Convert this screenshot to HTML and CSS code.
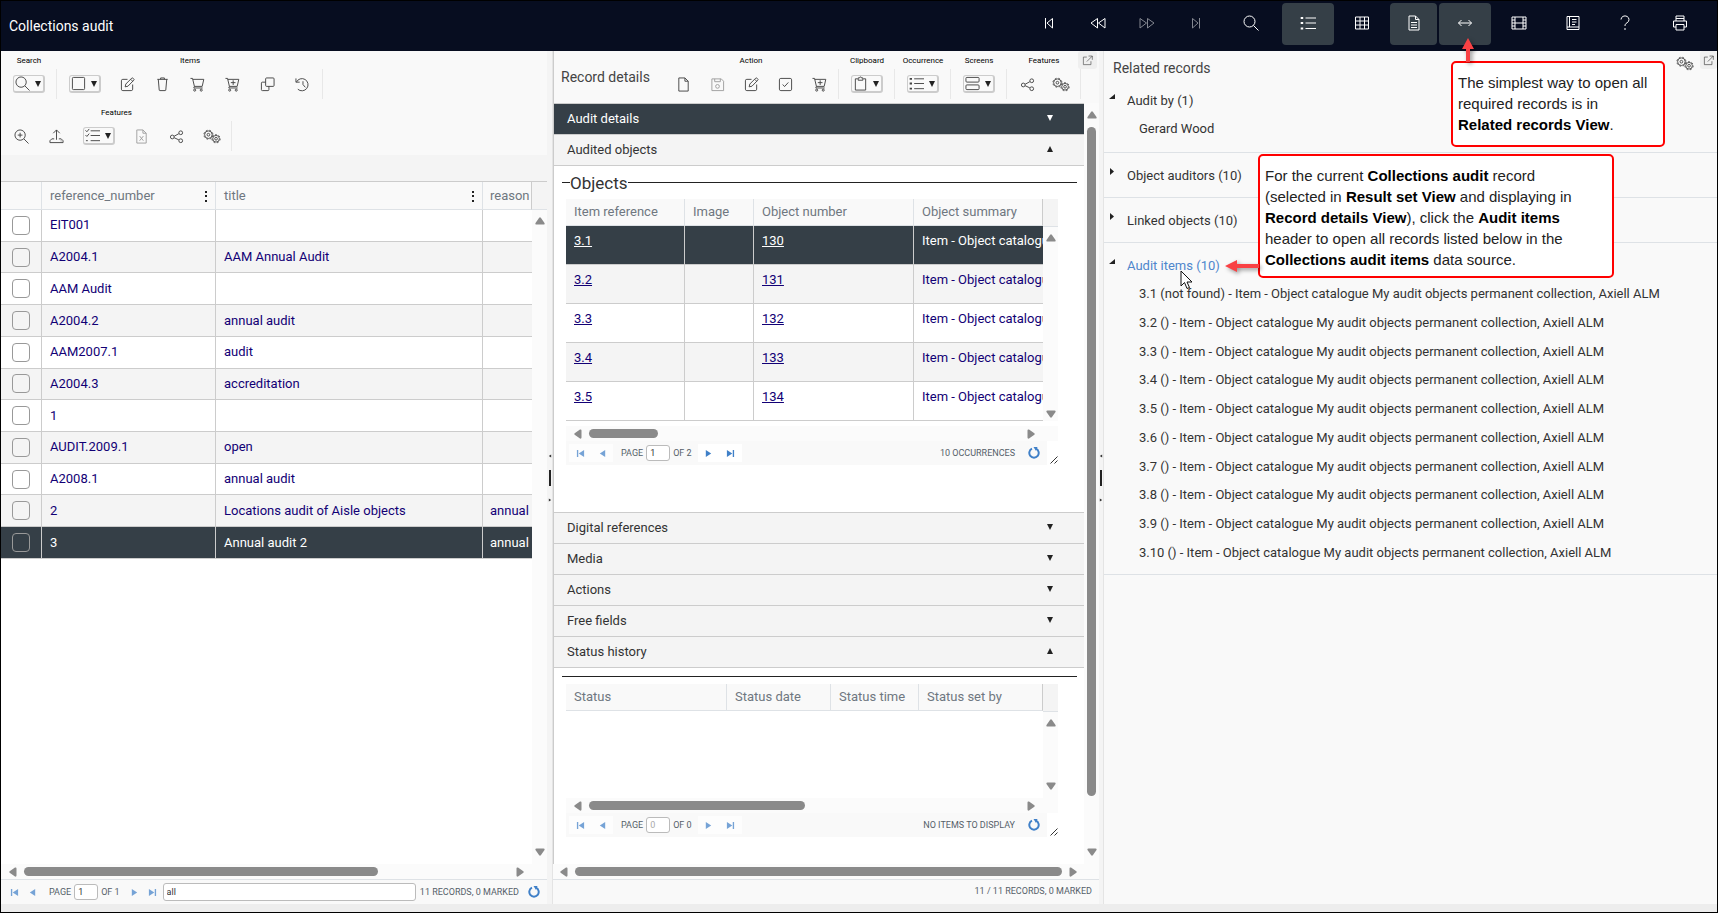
FILE: index.html
```html
<!DOCTYPE html>
<html lang="en">
<head>
  <meta charset="UTF-8" />
  <meta name="viewport" content="width=device-width, initial-scale=1" />
  <title>Collections audit</title>
  <link rel="stylesheet" href="styles.css">
</head>
<body>
  <!-- Icon sprite -->
  <svg class="sprite" aria-hidden="true">
    <symbol id="search" viewBox="0 0 16 16"><circle cx="6.5" cy="6.5" r="5.5"/><path d="M10.5 10.5l5 5"/></symbol>
    <symbol id="zoom-in" viewBox="0 0 16 16"><circle cx="6.5" cy="6.5" r="5.5"/><path d="M10.5 10.5l5 5M6.5 4v5M4 6.5h5"/></symbol>
    <symbol id="square" viewBox="0 0 16 16"><rect x="1.5" y="1.5" width="13" height="13" rx="1"/></symbol>
    <symbol id="edit" viewBox="0 0 16 16"><path d="M8 2.5H3a1.5 1.5 0 0 0-1.500 1.500v9A1.500 1.500 0 0 0 3 14.500h9a1.500 1.500 0 0 0 1.500-1.500V8M5.500 10.500l.7-3 6.300-6.300a.8.8 0 0 1 1.200 0l1 1a.8.8 0 0 1 0 1.200L8.500 9.800zM11.500 2.500l2 2"/></symbol>
    <symbol id="trash" viewBox="0 0 16 16"><path d="M2.500 2.500h11M3.500 2.500l1 11.500a.6.6 0 0 0 .6.500h5.800a.6.6 0 0 0 .6-.5l1-11.500M6 2.500V1h4v1.500"/></symbol>
    <symbol id="cart" viewBox="0 0 16 16"><path d="M.5 1.500h2.200l2 8.500h8.300l1.700-7.500H3M4.700 10l-.7 1.700h9.500"/><circle cx="5" cy="14" r="1.100"/><circle cx="12" cy="14" r="1.100"/></symbol>
    <symbol id="cart-plus" viewBox="0 0 16 16"><path d="M.5 1.500h2.200l2 8.500h8.300l1.700-7.500H3M4.700 10l-.7 1.700h9.500M8.700 3.500v5M6.200 6h5"/><circle cx="5" cy="14" r="1.100"/><circle cx="12" cy="14" r="1.100"/></symbol>
    <symbol id="copy" viewBox="0 0 16 16"><rect x="6" y="1" width="9" height="9" rx="1"/><path d="M6 5.500H2.500a1 1 0 0 0-1 1v7a1 1 0 0 0 1 1h6a1 1 0 0 0 1-1V10"/></symbol>
    <symbol id="history" viewBox="0 0 16 16"><path d="M1.500 5.500A6.500 6.500 0 1 1 3 13M1 1.500v4h4M8.500 4.500V8l2.500 3"/></symbol>
    <symbol id="upload" viewBox="0 0 16 16"><path d="M8 11.500V1M4.500 4.500L8 1l3.500 3.500M5.500 10.500H3l-2 2v2h14v-2l-2-2h-2.500M12.500 12.700h.8"/></symbol>
    <symbol id="checklist" viewBox="0 0 16 16"><path d="M6 3h10M6 8h10M6 13.500h10M.5 2.500L2 4l2.500-3M.5 7.500L2 9l2.500-3M1 13.500h2"/></symbol>
    <symbol id="excel" viewBox="0 0 16 16"><path d="M3.500 1h6l3.500 3.500V15h-10V1zM9.500 1v3.500H13M6 7.500l4 5M10 7.500l-4 5"/></symbol>
    <symbol id="share" viewBox="0 0 16 16"><circle cx="3.500" cy="8.500" r="2"/><circle cx="12.500" cy="4" r="2"/><circle cx="12.500" cy="12.500" r="2"/><path d="M5.500 7.700l5-2.700M5.500 9.300l5 2.300"/></symbol>
    <symbol id="gears" viewBox="0 0 20 16"><circle cx="6" cy="6" r="1.500"/><circle cx="6" cy="6" r="4.200"/><circle class="teeth" cx="6" cy="6" r="5"/><circle cx="14.500" cy="10.500" r="1.500"/><circle cx="14.500" cy="10.500" r="3.700"/><circle class="teeth" cx="14.500" cy="10.500" r="4.600"/></symbol>
    <symbol id="page" viewBox="0 0 16 16"><path d="M3 1h6.500L13 4.500V15H3zM9.500 1v3.500H13"/></symbol>
    <symbol id="save" viewBox="0 0 16 16"><path d="M2 2h10l2.500 2.500V14.500H2zM5 2v3h6V2"/><circle cx="8" cy="10" r="2"/></symbol>
    <symbol id="check" viewBox="0 0 16 16"><rect x="1.500" y="1.500" width="13" height="13" rx="1.500"/><path d="M5 8l2 2.200 4-4.400"/></symbol>
    <symbol id="clipboard" viewBox="0 0 16 16"><path d="M5 3H2.500v12h11V3H11M5.500 2h1.500a1 1 0 0 1 2 0h1.500v2.500h-5z"/></symbol>
    <symbol id="list" viewBox="0 0 16 16"><path d="M5.500 3H16M5.500 8H16M5.500 13.500H16"/><path class="bold" d="M.7 3h2.500M.7 8h2.500M.7 13.500h2.500"/></symbol>
    <symbol id="screens" viewBox="0 0 16 16"><rect x="1" y="1.500" width="14" height="5" rx="1"/><rect x="1" y="9.500" width="14" height="5" rx="1"/></symbol>
    <symbol id="popout" viewBox="0 0 16 16"><path d="M7 3H2v11h11V9M9.500 1.500H15V7M15 1.500L7 9.500"/></symbol>
    <symbol id="skip-first" viewBox="0 0 16 16"><path d="M4.500 3v10.500M11.500 3.500v9.500L6 8z"/></symbol>
    <symbol id="skip-last" viewBox="0 0 16 16"><path d="M11.500 3v10.500M4.500 3.500v9.500L10 8z"/></symbol>
    <symbol id="rewind" viewBox="0 0 16 16"><path d="M7.500 3.500v9.500L1 8zM15 3.500v9.500L8.500 8z"/></symbol>
    <symbol id="forward" viewBox="0 0 16 16"><path d="M8.500 3.500v9.500L15 8zM1 3.500v9.500L7.500 8z"/></symbol>
    <symbol id="table" viewBox="0 0 16 16"><path d="M1.500 2h13v12h-13zM1.500 6h13M1.500 10h13M6 2v12M10.500 2v12"/></symbol>
    <symbol id="doc" viewBox="0 0 16 16"><path d="M3 1h6.500L13 4.500V15H3zM9.500 1v3.500H13M5 7.500h6M5 10h6M5 12.500h6"/></symbol>
    <symbol id="arrows" viewBox="0 0 16 16"><path d="M1.500 8h13M4.500 5l-3 3 3 3M11.500 5l3 3-3 3"/></symbol>
    <symbol id="film" viewBox="0 0 16 16"><path d="M1 2h14v12H1zM4 2v12M12 2v12M4 8h8M1 5h3M1 8h3M1 11h3M12 5h3M12 8h3M12 11h3"/></symbol>
    <symbol id="book" viewBox="0 0 16 16"><path d="M14 1.500H2v13h12M14 1.500v13M2 12h12M4.500 1.500V12M7 4.500h4.500M7 7h4.500M7 9.500h3"/></symbol>
    <symbol id="print" viewBox="0 0 16 16"><path d="M4 6V1h8v5M4 12H1.500V6h13v6H12M4 9.500h8V15H4zM4 3.500h8"/></symbol>
    <symbol id="help" viewBox="0 0 16 16"><path d="M4 4.500a4 3.700 0 1 1 6 3.300C8.500 8.700 8 9.300 8 11M8 13v2"/></symbol>
    <symbol id="first" viewBox="0 0 10 10"><path class="solid" d="M1 1h1.500v8H1zM9 1v8L3 5z"/></symbol>
    <symbol id="prev" viewBox="0 0 10 10"><path class="solid" d="M8 1v8L2 5z"/></symbol>
    <symbol id="next" viewBox="0 0 10 10"><path class="solid" d="M2 1v8l6-4z"/></symbol>
    <symbol id="last" viewBox="0 0 10 10"><path class="solid" d="M7.500 1H9v8H7.500zM1 1v8l6-4z"/></symbol>
    <symbol id="refresh" viewBox="0 0 12 12"><path class="thick" d="M4 1.700A4.700 4.700 0 1 0 8 1.700"/><path class="solid" d="M5.500 0h4L8 4z"/></symbol>
    <symbol id="grip" viewBox="0 0 8 8"><path d="M.5 7.500l7-7M4.500 7.500l3-3"/></symbol>
    <symbol id="up" viewBox="0 0 10 8"><path class="solid" d="M4 1q1-1.500 2 0l3.500 5q.5 1.500-1 1.500h-7Q0 7.500.5 6z"/></symbol>
    <symbol id="down" viewBox="0 0 10 8"><path class="solid" d="M4 7q1 1.500 2 0l3.500-5Q10 .5 8.500.5h-7Q0 .5.500 2z"/></symbol>
    <symbol id="left" viewBox="0 0 8 10"><path class="solid" d="M1 4q-1.500 1 0 2l5 3.500q1.500.5 1.500-1v-7Q7.500 0 6 .500z"/></symbol>
    <symbol id="right" viewBox="0 0 8 10"><path class="solid" d="M7 4q1.500 1 0 2L2 9.500Q.5 10 .5 8.500v-7Q.5 0 2 .500z"/></symbol>
    <symbol id="caret-down" viewBox="0 0 8 8"><path class="solid" d="M1 1h6L4 7z"/></symbol>
    <symbol id="caret-up" viewBox="0 0 8 8"><path class="solid" d="M1 7h6L4 1z"/></symbol>
    <symbol id="caret-right" viewBox="0 0 8 8"><path class="solid" d="M2 1v7l4-3.500z"/></symbol>
    <symbol id="caret-open" viewBox="0 0 8 8"><path class="solid" d="M7 2v5H1z"/></symbol>
  </svg>

  <div class="app">
    <header class="topbar">
      <h1>Collections audit</h1>
      <nav class="topnav">
        <button class="nav" aria-label="First"><svg><use href="#skip-first"/></svg></button>
        <button class="nav" aria-label="Previous"><svg><use href="#rewind"/></svg></button>
        <button class="nav off" aria-label="Next"><svg><use href="#forward"/></svg></button>
        <button class="nav off" aria-label="Last"><svg><use href="#skip-last"/></svg></button>
        <button class="wide" aria-label="Search"><svg><use href="#search"/></svg></button>
        <button class="active" aria-label="Result set"><svg><use href="#list"/></svg></button>
        <button aria-label="Gallery"><svg><use href="#table"/></svg></button>
        <button class="nav active" aria-label="Record details"><svg><use href="#doc"/></svg></button>
        <button class="active" aria-label="Related records"><svg><use href="#arrows"/></svg></button>
        <button aria-label="Media"><svg><use href="#film"/></svg></button>
        <button aria-label="Thesaurus"><svg><use href="#book"/></svg></button>
        <button class="nav" aria-label="Help"><svg><use href="#help"/></svg></button>
        <button class="wide" aria-label="Print"><svg><use href="#print"/></svg></button>
      </nav>
    </header>

    <main class="panels">
      <!-- Result set -->
      <section class="panel result-set">
        <div class="toolbars">
          <div class="toolbar">
            <div class="group">
              <span>Search</span>
              <div class="tools"><button class="menu" aria-label="Search"><svg><use href="#search"/></svg><svg class="caret"><use href="#caret-down"/></svg></button></div>
            </div>
            <div class="group">
              <span>Items</span>
              <div class="tools">
                <button class="menu" aria-label="Mark"><svg><use href="#square"/></svg><svg class="caret"><use href="#caret-down"/></svg></button>
                <button aria-label="Edit"><svg><use href="#edit"/></svg></button>
                <button aria-label="Delete"><svg><use href="#trash"/></svg></button>
                <button aria-label="Cart"><svg><use href="#cart"/></svg></button>
                <button aria-label="Add to cart"><svg><use href="#cart-plus"/></svg></button>
                <button aria-label="Copy"><svg><use href="#copy"/></svg></button>
                <button aria-label="History"><svg><use href="#history"/></svg></button>
              </div>
            </div>
          </div>
          <div class="toolbar">
            <div class="group">
              <span>Features</span>
              <div class="tools">
                <button aria-label="Zoom"><svg><use href="#zoom-in"/></svg></button>
                <button aria-label="Upload"><svg><use href="#upload"/></svg></button>
                <button class="menu" aria-label="Tasks"><svg><use href="#checklist"/></svg><svg class="caret"><use href="#caret-down"/></svg></button>
                <button class="off" aria-label="Excel"><svg><use href="#excel"/></svg></button>
                <button aria-label="Share"><svg><use href="#share"/></svg></button>
                <button aria-label="Settings"><svg class="gears"><use href="#gears"/></svg></button>
              </div>
            </div>
          </div>
        </div>
        <div class="band"></div>
        <div class="grid records">
          <div class="grid-view">
            <table>
              <colgroup><col class="c-check"><col class="c-ref"><col class="c-title"><col class="c-reason"></colgroup>
              <thead>
                <tr><th></th><th>reference_number<i class="dots"></i></th><th>title<i class="dots"></i></th><th>reason</th></tr>
              </thead>
              <tbody>
                <tr><td><input type="checkbox" aria-label="Mark"></td><td>EIT001</td><td></td><td></td></tr>
                <tr><td><input type="checkbox" aria-label="Mark"></td><td>A2004.1</td><td>AAM Annual Audit</td><td></td></tr>
                <tr><td><input type="checkbox" aria-label="Mark"></td><td>AAM Audit</td><td></td><td></td></tr>
                <tr><td><input type="checkbox" aria-label="Mark"></td><td>A2004.2</td><td>annual audit</td><td></td></tr>
                <tr><td><input type="checkbox" aria-label="Mark"></td><td>AAM2007.1</td><td>audit</td><td></td></tr>
                <tr><td><input type="checkbox" aria-label="Mark"></td><td>A2004.3</td><td>accreditation</td><td></td></tr>
                <tr><td><input type="checkbox" aria-label="Mark"></td><td>1</td><td></td><td></td></tr>
                <tr><td><input type="checkbox" aria-label="Mark"></td><td>AUDIT.2009.1</td><td>open</td><td></td></tr>
                <tr><td><input type="checkbox" aria-label="Mark"></td><td>A2008.1</td><td>annual audit</td><td></td></tr>
                <tr><td><input type="checkbox" aria-label="Mark"></td><td>2</td><td>Locations audit of Aisle objects</td><td>annual</td></tr>
                <tr class="selected"><td><input type="checkbox" aria-label="Mark"></td><td>3</td><td>Annual audit 2</td><td>annual</td></tr>
              </tbody>
            </table>
          </div>
          <div class="vscroll headed"><svg><use href="#up"/></svg><svg><use href="#down"/></svg></div>
        </div>
        <div class="hscroll"><svg><use href="#left"/></svg><div class="track"><div class="thumb" style="width: 73%"></div></div><svg><use href="#right"/></svg></div>
        <footer class="pager main-pager">
          <button class="off" aria-label="First page"><svg><use href="#first"/></svg></button>
          <button class="off" aria-label="Previous page"><svg><use href="#prev"/></svg></button>
          <label for="page1">PAGE</label><input id="page1" class="num" type="text" value="1"><span>OF 1</span>
          <button class="off" aria-label="Next page"><svg><use href="#next"/></svg></button>
          <button class="off" aria-label="Last page"><svg><use href="#last"/></svg></button>
          <input class="filter" type="text" value="all" aria-label="Query">
          <span>11 RECORDS, 0 MARKED</span>
          <button class="refresh" aria-label="Refresh"><svg><use href="#refresh"/></svg></button>
        </footer>
      </section>

      <div class="splitter"><svg><use href="#prev"/></svg><b></b><svg><use href="#next"/></svg></div>

      <!-- Record details -->
      <section class="panel details">
        <div class="toolbar titled">
          <h2>Record details</h2>
          <div class="group">
            <span>Action</span>
            <div class="tools">
              <button aria-label="New"><svg><use href="#page"/></svg></button>
              <button class="off" aria-label="Save"><svg><use href="#save"/></svg></button>
              <button aria-label="Edit"><svg><use href="#edit"/></svg></button>
              <button aria-label="Mark"><svg><use href="#check"/></svg></button>
              <button aria-label="Add to cart"><svg><use href="#cart-plus"/></svg></button>
            </div>
          </div>
          <div class="group">
            <span>Clipboard</span>
            <div class="tools"><button class="menu" aria-label="Clipboard"><svg><use href="#clipboard"/></svg><svg class="caret"><use href="#caret-down"/></svg></button></div>
          </div>
          <div class="group">
            <span>Occurrence</span>
            <div class="tools"><button class="menu" aria-label="Occurrence"><svg><use href="#list"/></svg><svg class="caret"><use href="#caret-down"/></svg></button></div>
          </div>
          <div class="group">
            <span>Screens</span>
            <div class="tools"><button class="menu" aria-label="Screens"><svg><use href="#screens"/></svg><svg class="caret"><use href="#caret-down"/></svg></button></div>
          </div>
          <div class="group">
            <span>Features</span>
            <div class="tools">
              <button aria-label="Share"><svg><use href="#share"/></svg></button>
              <button aria-label="Settings"><svg class="gears"><use href="#gears"/></svg></button>
            </div>
          </div>
          <button class="popout" aria-label="Open in window"><svg><use href="#popout"/></svg></button>
        </div>

        <div class="details-body">
          <div class="accordion">
            <button class="bar current">Audit details<svg><use href="#caret-down"/></svg></button>
            <button class="bar">Audited objects<svg><use href="#caret-up"/></svg></button>
            <div class="content objects">
              <h3>Objects</h3>
              <div class="grid">
                <div class="grid-view">
                  <table>
                    <colgroup><col class="c-item"><col class="c-image"><col class="c-number"><col></colgroup>
                    <thead><tr><th>Item reference</th><th>Image</th><th>Object number</th><th>Object summary</th></tr></thead>
                    <tbody>
                      <tr class="selected"><td><a href="#">3.1</a></td><td></td><td><a href="#">130</a></td><td>Item - Object catalogue</td></tr>
                      <tr><td><a href="#">3.2</a></td><td></td><td><a href="#">131</a></td><td>Item - Object catalogue</td></tr>
                      <tr><td><a href="#">3.3</a></td><td></td><td><a href="#">132</a></td><td>Item - Object catalogue</td></tr>
                      <tr><td><a href="#">3.4</a></td><td></td><td><a href="#">133</a></td><td>Item - Object catalogue</td></tr>
                      <tr><td><a href="#">3.5</a></td><td></td><td><a href="#">134</a></td><td>Item - Object catalogue</td></tr>
                    </tbody>
                  </table>
                </div>
                <div class="vscroll headed"><svg><use href="#up"/></svg><svg><use href="#down"/></svg></div>
              </div>
              <div class="hscroll"><svg><use href="#left"/></svg><div class="track"><div class="thumb" style="width: 16%"></div></div><svg><use href="#right"/></svg></div>
              <div class="pager">
                <button class="off" aria-label="First page"><svg><use href="#first"/></svg></button>
                <button class="off" aria-label="Previous page"><svg><use href="#prev"/></svg></button>
                <label for="page2">PAGE</label><input id="page2" class="num" type="text" value="1"><span>OF 2</span>
                <button aria-label="Next page"><svg><use href="#next"/></svg></button>
                <button aria-label="Last page"><svg><use href="#last"/></svg></button>
                <span class="count">10 OCCURRENCES</span>
                <button class="refresh" aria-label="Refresh"><svg><use href="#refresh"/></svg></button>
                <svg class="grip"><use href="#grip"/></svg>
              </div>
            </div>
            <button class="bar">Digital references<svg><use href="#caret-down"/></svg></button>
            <button class="bar">Media<svg><use href="#caret-down"/></svg></button>
            <button class="bar">Actions<svg><use href="#caret-down"/></svg></button>
            <button class="bar">Free fields<svg><use href="#caret-down"/></svg></button>
            <button class="bar">Status history<svg><use href="#caret-up"/></svg></button>
            <div class="content status">
              <hr>
              <div class="grid">
                <div class="grid-view">
                  <table>
                    <colgroup><col class="c-status"><col class="c-date"><col class="c-time"><col></colgroup>
                    <thead><tr><th>Status</th><th>Status date</th><th>Status time</th><th>Status set by</th></tr></thead>
                  </table>
                </div>
                <div class="vscroll headed"><svg><use href="#up"/></svg><svg><use href="#down"/></svg></div>
              </div>
              <div class="hscroll"><svg><use href="#left"/></svg><div class="track"><div class="thumb" style="width: 50%"></div></div><svg><use href="#right"/></svg></div>
              <div class="pager">
                <button class="off" aria-label="First page"><svg><use href="#first"/></svg></button>
                <button class="off" aria-label="Previous page"><svg><use href="#prev"/></svg></button>
                <label for="page3">PAGE</label><input id="page3" class="num" type="text" value="0" disabled><span>OF 0</span>
                <button class="off" aria-label="Next page"><svg><use href="#next"/></svg></button>
                <button class="off" aria-label="Last page"><svg><use href="#last"/></svg></button>
                <span class="count">NO ITEMS TO DISPLAY</span>
                <button class="refresh" aria-label="Refresh"><svg><use href="#refresh"/></svg></button>
                <svg class="grip"><use href="#grip"/></svg>
              </div>
            </div>
          </div>
          <div class="vscroll"><svg><use href="#up"/></svg><div class="thumb"></div><svg><use href="#down"/></svg></div>
        </div>
        <div class="hscroll full"><svg><use href="#left"/></svg><div class="track"><div class="thumb"></div></div><svg><use href="#right"/></svg></div>
        <footer class="pager details-foot"><span>11 / 11 RECORDS, 0 MARKED</span></footer>
      </section>

      <div class="splitter"><svg><use href="#prev"/></svg><b></b><svg><use href="#next"/></svg></div>

      <!-- Related records -->
      <section class="panel related">
        <div class="related-head">
          <h2>Related records</h2>
          <button aria-label="Settings"><svg class="gears"><use href="#gears"/></svg></button>
          <button class="popout" aria-label="Open in window"><svg><use href="#popout"/></svg></button>
        </div>
        <div class="source first">
          <a class="source-name" href="#"><svg><use href="#caret-open"/></svg>Audit by (1)</a>
          <ul><li>Gerard Wood</li></ul>
        </div>
        <div class="source"><a class="source-name" href="#"><svg><use href="#caret-right"/></svg>Object auditors (10)</a></div>
        <div class="source"><a class="source-name" href="#"><svg><use href="#caret-right"/></svg>Linked objects (10)</a></div>
        <div class="source">
          <a class="source-name hover" href="#"><svg><use href="#caret-open"/></svg>Audit items (10)</a>
          <ul class="ten">
            <li>3.1 (not found) - Item - Object catalogue My audit objects permanent collection, Axiell ALM</li>
            <li>3.2 () - Item - Object catalogue My audit objects permanent collection, Axiell ALM</li>
            <li>3.3 () - Item - Object catalogue My audit objects permanent collection, Axiell ALM</li>
            <li>3.4 () - Item - Object catalogue My audit objects permanent collection, Axiell ALM</li>
            <li>3.5 () - Item - Object catalogue My audit objects permanent collection, Axiell ALM</li>
            <li>3.6 () - Item - Object catalogue My audit objects permanent collection, Axiell ALM</li>
            <li>3.7 () - Item - Object catalogue My audit objects permanent collection, Axiell ALM</li>
            <li>3.8 () - Item - Object catalogue My audit objects permanent collection, Axiell ALM</li>
            <li>3.9 () - Item - Object catalogue My audit objects permanent collection, Axiell ALM</li>
            <li>3.10 () - Item - Object catalogue My audit objects permanent collection, Axiell ALM</li>
          </ul>
          <svg class="cursor" viewBox="0 0 13 20"><path d="M1 1v15l3.500-3.500L7 18.500l2.500-1L7 12h5z"/></svg>
          <div class="callout audit-note">
            <svg class="pointer-left" viewBox="0 0 34 16"><path d="M0 7l12-6v4h22v4H12v4z"/></svg>
            For the current <b>Collections audit</b> record<br>(selected in <b>Result set View</b> and displaying in<br><b>Record details View</b>), click the <b>Audit items</b><br>header to open all records listed below in the<br><b>Collections audit items</b> data source.
          </div>
        </div>
      </section>
    </main>
    <div class="base"></div>

    <div class="callout view-note">
      <svg class="pointer-up" viewBox="0 0 16 24"><path d="M7 0l6 11H9v13H5V11H1z"/></svg>
      The simplest way to open all<br>required records is in<br><b>Related records View</b>.
    </div>
  </div>
</body>
</html>
```

FILE: styles.css
```css
* {
  box-sizing: border-box;
}

body {
  margin: 0;
  font-family: Roboto, "Liberation Sans", sans-serif;
  font-size: 13px;
  color: #333;
}

h1, h2, h3, ul {
  margin: 0;
  padding: 0;
  font-weight: normal;
}

button {
  margin: 0;
  padding: 0;
  border: none;
  background: none;
  font: inherit;
  color: inherit;
}

a {
  color: inherit;
}

svg {
  display: block;
  flex: none;
  width: 16px;
  height: 16px;
  fill: none;
  stroke: currentColor;
}

.sprite {
  position: absolute;
  width: 0;
  height: 0;
}

.solid {
  fill: currentColor;
  stroke: none;
}

.bold {
  stroke-width: 2;
}

.thick {
  stroke-width: 2;
}

.teeth {
  stroke-dasharray: 2 2;
}

.off {
  opacity: 0.5;
}

.app {
  position: relative;
  display: flex;
  flex-direction: column;
  height: 100vh;
  border: 1px solid #000;
  overflow: hidden;
}

/* Top bar */
.topbar {
  display: flex;
  justify-content: space-between;
  height: 50px;
  flex: none;
  padding: 2px 8px;
  background: #070d20;
  color: #fff;
}

.topbar h1 {
  font-size: 14px;
  line-height: 46px;
}

.topnav {
  display: flex;
  gap: 2px;
}

.topnav button {
  display: flex;
  align-items: center;
  justify-content: center;
  width: 52px;
  height: 42px;
  padding-bottom: 2px;
  border-radius: 4px;
}

.topnav .nav {
  width: 47px;
}

.topnav .wide {
  width: 59px;
}

.topnav .active {
  background: #353f47;
}

/* Panels */
.panels {
  flex: 1;
  min-height: 0;
  display: grid;
  grid-template-columns: 546fr 6px 546fr 5px 613fr;
}

.panel {
  display: flex;
  flex-direction: column;
  min-width: 0;
  min-height: 0;
  background: #f9f9f9;
}

.base {
  height: 8px;
  background: #ededed;
}

.splitter {
  display: flex;
  flex-direction: column;
  align-items: center;
  justify-content: center;
  gap: 12px;
  background: #f4f4f4;
  border-right: 1px solid #e4e4e4;
}

.splitter b {
  width: 2px;
  height: 16px;
  background: #222;
}

.splitter svg {
  width: 4px;
  height: 4px;
}

/* Toolbars */
.toolbar {
  display: flex;
  height: 52px;
}

.group {
  padding: 4px 3px 0;
  text-align: center;
  font-size: 8px;
  line-height: 12px;
  color: #000;
}

.tools {
  display: flex;
  align-items: center;
  height: 34px;
  position: relative;
  color: #444;
}

.group .tools::after {
  content: "";
  position: absolute;
  right: -3px;
  top: 2px;
  width: 1px;
  height: 30px;
  background: #e8e8e8;
}

.tools button {
  display: flex;
  align-items: center;
  justify-content: center;
  width: 35px;
  height: 18px;
}

.tools svg {
  width: 15px;
  height: 15px;
}

.tools .menu {
  width: 32px;
  gap: 4px;
  margin: 0 9px;
  border: 1px solid #ccc;
  border-width: 1px 2px 2px 1px;
  border-radius: 3px;
}

.tools .caret {
  width: 8px;
  height: 8px;
  color: #222;
}

.tools .gears, .related-head .gears {
  width: 18px;
  height: 15px;
}

.titled {
  position: relative;
  border-left: 1px solid #ccc;
}

.titled h2 {
  flex: 1;
  padding-left: 7px;
  white-space: nowrap;
}

h2 {
  font-size: 14px;
  line-height: 52px;
  color: #444;
}

.titled .tools button {
  width: 34px;
}

.titled .tools .menu {
  width: 32px;
}

.titled .group:last-of-type {
  margin-right: 18px;
}

.popout {
  display: flex;
  align-items: center;
  justify-content: center;
  width: 19px;
  height: 18px;
  background: #efefef;
  border-radius: 3px;
  color: #555;
}

.popout svg {
  width: 11px;
  height: 11px;
}

.titled .popout {
  position: absolute;
  right: 2px;
  top: 0;
}

/* Grids */
.band {
  height: 27px;
  flex: none;
  background: #f4f4f4;
  border-bottom: 1px solid #ccc;
}

.grid {
  display: flex;
  background: #fff;
}

.grid-view {
  flex: 1;
  min-width: 0;
  overflow: hidden;
}

.records {
  flex: 1;
  min-height: 0;
}

table {
  width: 100%;
  table-layout: fixed;
  border-collapse: separate;
  border-spacing: 0;
}

.records table {
  height: 377px;
}

th, td {
  padding: 0 8px;
  text-align: left;
  font-weight: normal;
  white-space: nowrap;
  overflow: hidden;
  border-right: 1px solid #ccc;
  border-bottom: 1px solid #ccc;
}

th {
  position: relative;
  height: 28px;
  line-height: 20px;
  background: #f9f9f9;
  color: #6f7780;
  border-color: #dee2e6;
}

td {
  color: #120075;
}

td:last-child {
  padding-right: 0;
  border-right: none;
}

th:last-child {
  border-right-color: #ccc;
}

tbody tr:nth-child(even) {
  background: #f4f4f4;
}

tbody tr.selected {
  background: #353f47;
}

.selected td {
  color: #fff;
}

.records td {
  line-height: 18px;
}

.records td:first-child {
  padding: 0 10px 0 11px;
}

.records th:last-child, .records td:last-child {
  padding-left: 7px;
  padding-right: 0;
}

.records input {
  display: block;
  appearance: none;
  width: 18px;
  height: 19px;
  margin: 0;
  border: 1px solid #999;
  border-radius: 4px;
}

.dots {
  position: absolute;
  right: 8px;
  top: 9px;
  width: 2px;
  height: 11px;
  border: solid #222;
  border-width: 2px 0;
}

.dots::after {
  content: "";
  display: block;
  height: 2px;
  margin-top: 2px;
  background: #222;
  width: 2px;
}

.c-check { width: 41px; }
.c-ref { width: 174px; }
.c-reason { width: 49px; }
.c-item { width: 119px; }
.c-image { width: 69px; }
.c-number { width: 160px; }
.c-status { width: 161px; }
.c-date { width: 104px; }
.c-time { width: 88px; }

.content td {
  height: 39px;
  padding-top: 6px;
  line-height: 18px;
  vertical-align: top;
}

.content th {
  height: 27px;
}

/* Scrollbars */
.hscroll {
  display: flex;
  align-items: center;
  flex: none;
  height: 15px;
  gap: 7px;
  padding: 0 23px 0 8px;
  background: #fbfbfb;
  color: #8a8a8a;
}

.hscroll svg {
  width: 8px;
  height: 10px;
}

.track {
  flex: 1;
}

.thumb {
  height: 9px;
  border-radius: 5px;
  background: #8a8a8a;
}

.vscroll {
  display: flex;
  flex-direction: column;
  justify-content: space-between;
  align-items: center;
  width: 15px;
  padding: 8px 0;
  background: #fbfbfb;
  color: #8a8a8a;
}

.vscroll svg {
  width: 10px;
  height: 8px;
}

.vscroll.headed {
  padding-top: 35px;
  background: linear-gradient(#f4f4f4 27px, #dee2e6 27px, #dee2e6 28px, #fbfbfb 28px);
}

.objects .vscroll {
  padding-bottom: 3px;
}

/* Pagers */
.pager {
  display: flex;
  align-items: center;
  flex: none;
  height: 24px;
  background: #f9f9f9;
  font-size: 9px;
  color: #555f69;
}

.pager button {
  display: flex;
  align-items: center;
  justify-content: center;
  width: 22px;
  height: 18px;
  background: #fff;
  color: #4080c8;
}

.pager button.off {
  opacity: 0.7;
}

.pager svg {
  width: 9px;
  height: 9px;
}

.pager .refresh {
  background: none;
}

.pager .refresh svg {
  width: 12px;
  height: 12px;
}

.pager input {
  height: 16px;
  padding: 0 3px;
  border: 1px solid #bbb;
  border-radius: 3px;
  background: #fff;
  font: inherit;
  color: #333;
}

.pager .num {
  width: 24px;
  margin: 0 3px;
}

.pager .num:disabled {
  color: #aaa;
}

.pager label {
  margin-left: 8px;
}

.pager .num + span {
  margin-right: 6px;
}

.main-pager {
  height: 25px;
  padding: 0 2px;
  border-top: 1px solid #dee2e6;
}

.main-pager button {
  width: 18px;
  background: none;
}

.main-pager button:first-child {
  margin-left: 2px;
}

.main-pager .filter {
  flex: 1;
  height: 18px;
  margin: 0 4px 0 1px;
}

.main-pager .refresh {
  width: 23px;
  margin-left: 3px;
}

.content .pager {
  position: relative;
  width: 481px;
  padding-left: 3px;
}

.content .count {
  margin-left: auto;
}

.content .refresh {
  width: 34px;
  padding-left: 4px;
  margin-right: -2px;
}

.content .grip {
  position: absolute;
  right: -11px;
  bottom: 1px;
  width: 8px;
  height: 8px;
  color: #333;
}

/* Record details */
.details-body {
  display: flex;
  flex: 1;
  min-height: 0;
}

.details-body > .vscroll .thumb {
  width: 9px;
  height: 669px;
  margin: 8px 0 auto;
}

.accordion {
  flex: 1;
  min-width: 0;
  overflow: hidden;
  background: #fff;
  border-left: 1px solid #ccc;
}

.bar {
  display: flex;
  align-items: center;
  justify-content: space-between;
  width: 100%;
  height: 31px;
  padding: 0 30px 2px 13px;
  background: #f4f4f4;
  border-top: 1px solid #ccc;
}

.bar svg {
  width: 8px;
  height: 8px;
  color: #222;
}

.bar.current, .bar.current svg {
  background: #353f47;
  color: #fff;
}

.content {
  border-top: 1px solid #ccc;
  padding: 0 26px 0 12px;
}

.objects {
  padding-bottom: 47px;
}

.content h3 {
  display: flex;
  align-items: center;
  height: 33px;
  margin: 0 -19px 0 -4px;
  font-size: 17px;
}

.content h3::before, .content h3::after {
  content: "";
  width: 8px;
  height: 1px;
  background: #222;
}

.content h3::after {
  flex: 1;
}

.content .hscroll {
  margin-top: 5px;
}

.status hr {
  height: 1px;
  margin: 8px -19px 7px -4px;
  border: none;
  background: #222;
}

.status .grid {
  height: 114px;
}

.content.status .hscroll {
  margin-top: 0;
}

.hscroll.full {
  padding: 0 22px 0 7px;
}

.details-foot {
  height: 25px;
  padding: 0 7px 2px;
  justify-content: flex-end;
  border-top: 1px solid #dee2e6;
}

/* Related records */
.related-head {
  display: flex;
  align-items: flex-start;
  height: 36px;
  padding-left: 9px;
}

.related-head h2 {
  flex: 1;
  line-height: 34px;
}

.related-head button {
  margin: 5px 6px 0 0;
  color: #444;
}

.related-head .popout {
  width: 17px;
  margin: 0;
}

.source {
  position: relative;
  padding-left: 4px;
  border-bottom: 1px solid #dee2e6;
}

.source-name {
  display: flex;
  align-items: center;
  height: 44px;
  gap: 11px;
  text-decoration: none;
}

.source.first .source-name {
  height: 26px;
}

.source-name svg {
  width: 8px;
  height: 8px;
  margin-bottom: 8px;
  color: #222;
}

.source-name.hover {
  color: #4f86cc;
}

.source ul {
  list-style: none;
  padding: 2px 0 9px 31px;
  line-height: 28px;
}

.source .ten {
  display: grid;
  height: 287px;
  padding: 0 0 0 31px;
  margin: -7px 0 7px;
  align-items: center;
}

/* Annotations */
.callout {
  position: absolute;
  padding: 9px 5px;
  background: #fff;
  border: 2px solid #f00;
  border-radius: 5px;
  font-family: "Liberation Sans", sans-serif;
  font-size: 15px;
  line-height: 21px;
  color: #222;
  white-space: nowrap;
}

.callout b {
  color: #000;
}

.callout svg {
  position: absolute;
  fill: #f94144;
  stroke: none;
  filter: drop-shadow(2px 2px 2px rgba(0, 0, 0, 0.4));
}

.view-note {
  top: 60px;
  right: 52px;
  width: 214px;
  height: 86px;
}

.audit-note {
  left: 154px;
  bottom: 296px;
  width: 356px;
  height: 124px;
}

.pointer-up {
  left: 8px;
  top: -25px;
  width: 16px;
  height: 24px;
}

.callout .pointer-left {
  left: -35px;
  bottom: 1px;
  width: 34px;
  height: 16px;
}

.cursor {
  position: absolute;
  left: 76px;
  top: 27px;
  width: 13px;
  height: 20px;
  fill: #fff;
  stroke: #111;
}
```
